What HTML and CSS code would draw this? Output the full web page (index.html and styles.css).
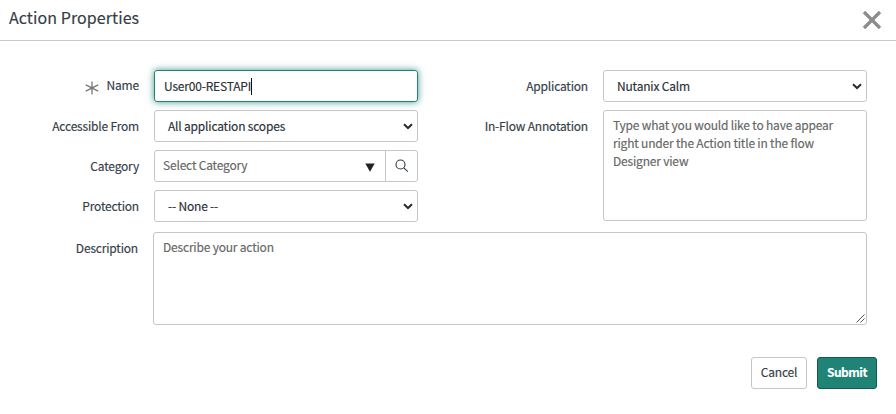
FILE: index.html
```html
<!DOCTYPE html>
<html lang="en">
<head>
<meta charset="utf-8">
<title>Action Properties</title>
<link rel="stylesheet" href="styles.css">
</head>
<body>
<main class="dialog">
  <header class="header">
    <h1 class="title">Action Properties</h1>
    <svg class="close" width="20" height="20" viewBox="0 0 20 20"><path d="M2 2L18 18M18 2L2 18"/></svg>
  </header>
  <form class="form">
    <div class="columns">
      <div class="column">
        <div class="row">
          <label class="label name-label"><svg class="required" width="14" height="14" viewBox="0 0 14 14"><path d="M7 .5V13.5M.8 3.8L13.2 10.2M13.2 3.8L.8 10.2"/></svg>Name</label>
          <div class="field focused"><span>User00-RESTAPI</span><i class="caret"></i></div>
        </div>
        <div class="row">
          <label class="label">Accessible From</label>
          <div class="field select"><span>All application scopes</span><svg class="chevron" width="10" height="7" viewBox="0 0 10 7"><path d="M1 1.2L5 5L9 1.2"/></svg></div>
        </div>
        <div class="row">
          <label class="label">Category</label>
          <div class="field lookup">
            <span class="placeholder">Select Category</span>
            <svg class="triangle" width="10" height="9" viewBox="0 0 10 9"><path d="M.3.5H9.7L5 8.7Z"/></svg>
            <div class="search"><svg width="14" height="14" viewBox="0 0 14 14"><circle cx="5.5" cy="5.5" r="4.5"/><path d="M8.8 8.8L12.8 12.6"/></svg></div>
          </div>
        </div>
        <div class="row">
          <label class="label">Protection</label>
          <div class="field select"><span>-- None --</span><svg class="chevron" width="10" height="7" viewBox="0 0 10 7"><path d="M1 1.2L5 5L9 1.2"/></svg></div>
        </div>
      </div>
      <div class="column">
        <div class="row">
          <label class="label">Application</label>
          <div class="field select"><span>Nutanix Calm</span><svg class="chevron" width="10" height="7" viewBox="0 0 10 7"><path d="M1 1.2L5 5L9 1.2"/></svg></div>
        </div>
        <div class="row">
          <label class="label">In-Flow Annotation</label>
          <div class="field area annotation placeholder">Type what you would like to have appear right under the Action title in the flow Designer view</div>
        </div>
      </div>
    </div>
    <div class="row description-row">
      <label class="label">Description</label>
      <div class="field area description placeholder">Describe your action<svg class="grip" width="9" height="9" viewBox="0 0 9 9"><path d="M.5 8.5L8.5 .5M4.5 8.5L8.5 4.5"/></svg></div>
    </div>
  </form>
  <footer class="footer">
    <button class="button" type="button">Cancel</button>
    <button class="button primary" type="button">Submit</button>
  </footer>
</main>
</body>
</html>
```
FILE: styles.css
```css
* { box-sizing: border-box; }
body {
  margin: 0;
  background: #fff;
  color: #343d47;
  font: 12px/18px "Noto Sans CJK SC", sans-serif;
  letter-spacing: -.19px;
  -webkit-text-stroke: .15px;
}
.dialog { height: 414px; overflow: hidden; }
.header {
  display: flex;
  justify-content: space-between;
  height: 41px;
  padding: 0 14px 0 9px;
  border-bottom: 1px solid #c8c8c8;
}
.title { margin: 5px 0 0; font-size: 16px; font-weight: 400; line-height: 24px; letter-spacing: .08px; }
.close { margin-top: 10px; fill: none; stroke: #8c8c8c; stroke-width: 3.3; }
.form { padding-top: 29px; }
.columns { display: flex; }
.column { display: flex; flex-direction: column; gap: 8px; width: 418px; }
.column + .column { width: 449px; }
.row { display: flex; justify-content: flex-end; gap: 15px; }
.label { padding-top: 7px; white-space: nowrap; }
.name-label { display: flex; gap: 8px; padding-top: 6px; }
.required { margin-top: 5px; fill: none; stroke: #777; stroke-width: 1.3; }
.field {
  display: flex;
  align-items: center;
  width: 264px;
  height: 32px;
  padding: 0 9px;
  border: 1px solid #c6c6c6;
  border-radius: 3px;
  color: #2b2f36;
  white-space: nowrap;
}
.focused { border-color: #1f8476; box-shadow: 0 0 7px rgba(31, 132, 118, .85); }
.caret { width: 1px; height: 17px; background: #111; }
.select { justify-content: space-between; padding: 0 4px 0 13px; }
.chevron { fill: none; stroke: #2b2b2b; stroke-width: 2; }
.placeholder { color: #666; }
.lookup { padding: 0 0 0 8px; }
.lookup .placeholder { flex: 1; margin-top: -2px; }
.triangle { margin: 2px 10px 0 0; fill: #222; }
.search {
  display: flex;
  align-items: center;
  justify-content: center;
  width: 32px;
  height: 30px;
  border-left: 1px solid #c6c6c6;
}
.search svg { fill: none; stroke: #2f3a44; stroke-width: 1.1; }
.area { display: block; padding-top: 5px; white-space: normal; }
.annotation { height: 111px; padding-right: 24px; }
.description-row { width: 867px; margin-top: 10px; }
.description { position: relative; width: 714px; height: 93px; }
.grip { position: absolute; right: 1px; bottom: 1px; fill: none; stroke: #555; stroke-width: 1; }
.footer { display: flex; justify-content: flex-end; gap: 10px; padding: 32px 19px 0 0; }
.button {
  width: 56px;
  height: 32px;
  padding: 0 0 2px;
  border: 1px solid #c6c6c6;
  border-radius: 3px;
  background: #fff;
  color: #343d47;
  font: inherit;
  letter-spacing: inherit;
}
.primary { width: 60px; border-color: #145a50; background: #1f8476; color: #fff; font-weight: 700; letter-spacing: -.5px; }
```
